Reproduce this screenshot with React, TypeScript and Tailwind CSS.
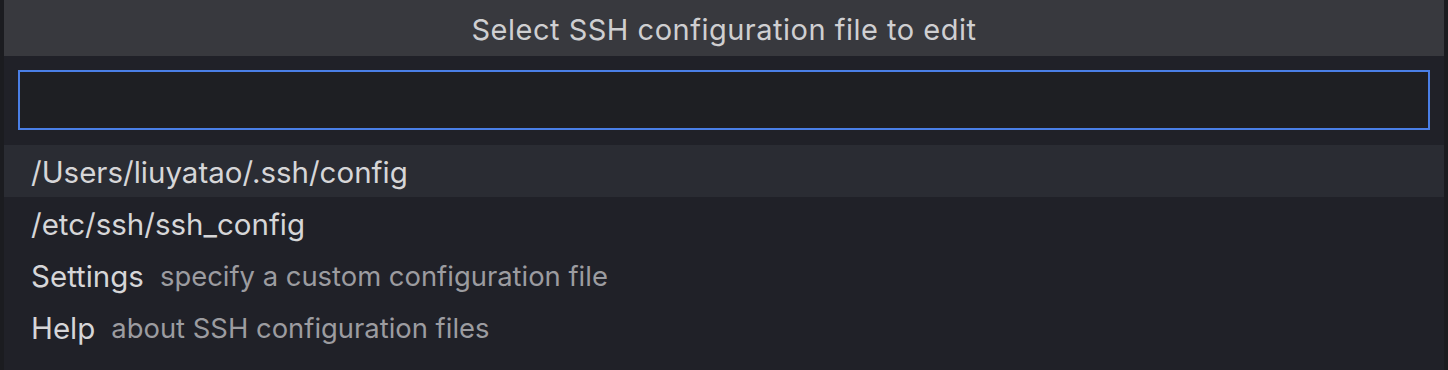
export default function App() {
  const items = [
    { label: "/Users/liuyatao/.ssh/config", active: true },
    { label: "/etc/ssh/ssh_config" },
    { label: "Settings", desc: "specify a custom configuration file" },
    { label: "Help", desc: "about SSH configuration files" },
  ];

  return (
    <div
      className="flex h-[370px] w-[1448px] bg-[#1b1c20]"
      style={{ fontFamily: "Inter, 'Noto Sans', sans-serif" }}
    >
      <div className="w-[4px] shrink-0" />
      <div className="flex flex-1 flex-col bg-[#202128]">
        <div className="flex h-[56px] items-center justify-center pt-[3px] bg-[#38393e] text-[29px] tracking-[0.5px] text-[#cfcfd1]">
          Select SSH configuration file to edit
        </div>
        <div className="px-[14px] pt-[14px] pb-[15px]">
          <div className="h-[60px] border-2 border-[#4a7fe6] bg-[#1e1f23]" />
        </div>
        <div className="flex flex-col">
          {items.map((it) => (
            <div
              key={it.label}
              className={`flex h-[52px] items-center gap-[16px] px-[27px] pt-[3px] ${
                it.active ? "bg-[#2a2c33]" : ""
              }`}
            >
              <span className="text-[29.5px] text-[#d6d6d8]">{it.label}</span>
              {it.desc && (
                <span className="text-[27.4px] text-[#9c9ca0]">{it.desc}</span>
              )}
            </div>
          ))}
        </div>
      </div>
      <div className="w-[4px] shrink-0" />
    </div>
  );
}
